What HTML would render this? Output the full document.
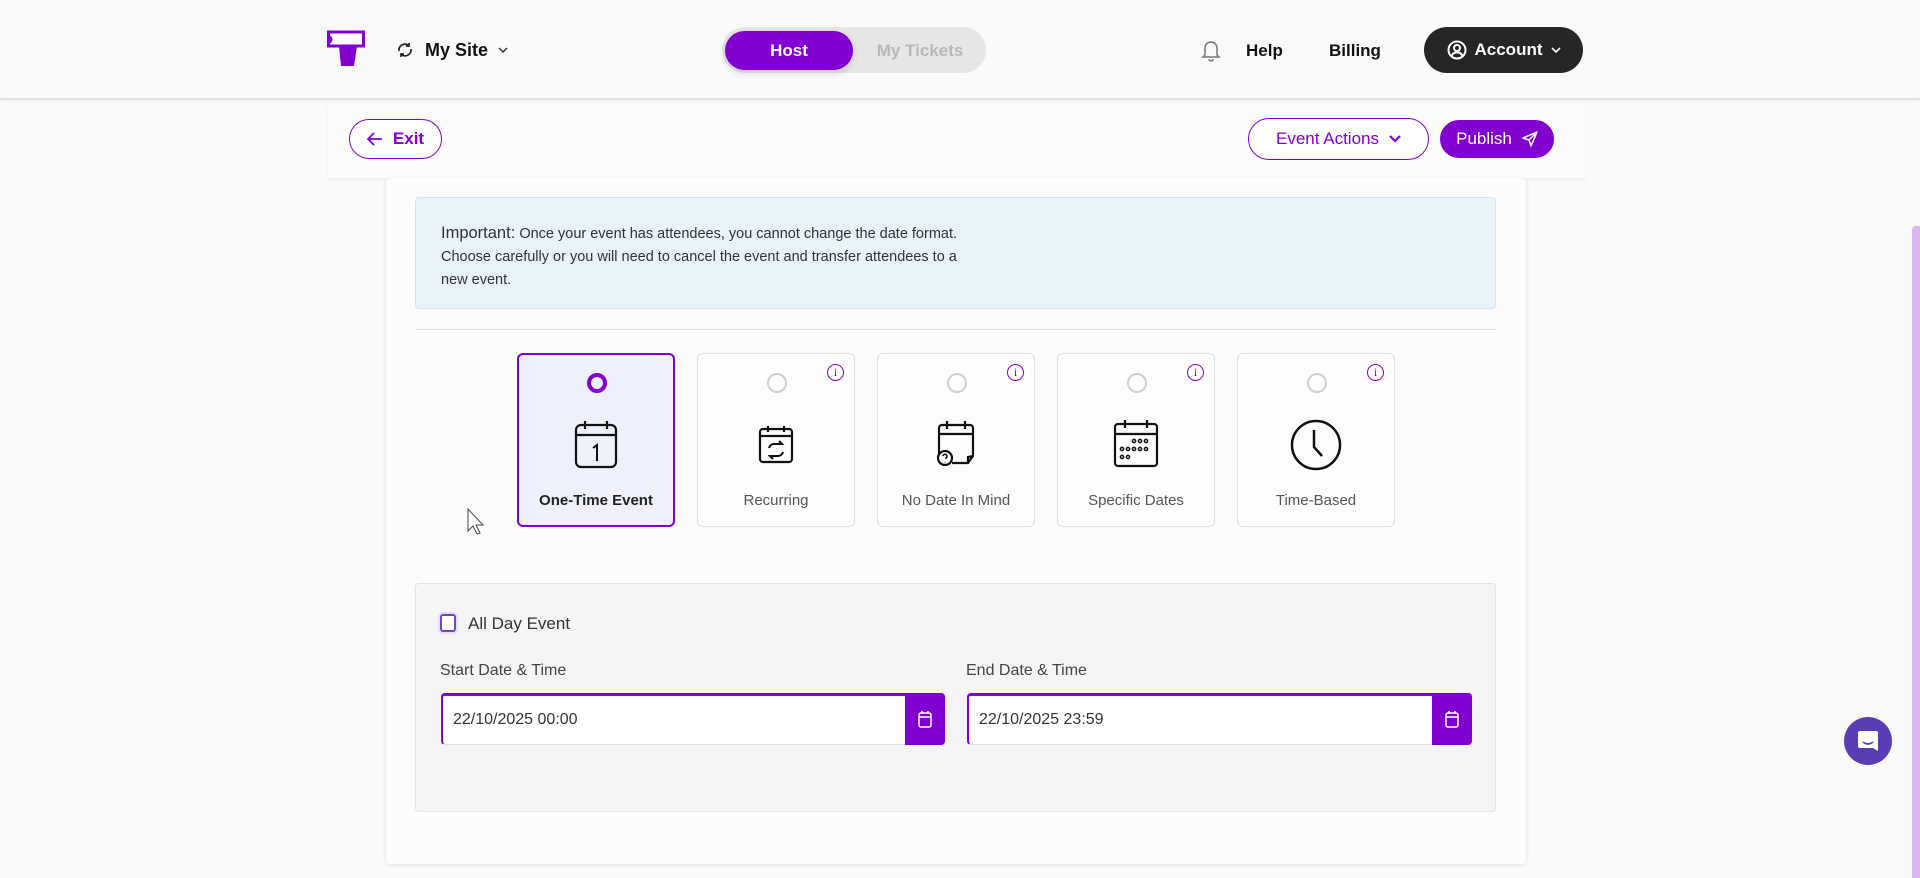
<!DOCTYPE html>
<html><head><meta charset="utf-8">
<style>
*{box-sizing:border-box;margin:0;padding:0}
body{width:1920px;height:878px;overflow:hidden;background:#fafafa;font-family:"Liberation Sans",sans-serif;color:#222;position:relative}
.abs{position:absolute}
.hdr{left:0;top:0;width:1920px;height:100px;background:#fafafa;border-bottom:2px solid #e2e2e2;box-shadow:0 1px 3px rgba(0,0,0,.05)}
.toggle{left:722px;top:27px;width:264px;height:46px;border-radius:23px;background:#e6e6e6}
.host{left:725px;top:31px;width:128px;height:39px;border-radius:20px;background:#8200d0;color:#fff;font-weight:bold;font-size:17px;display:flex;align-items:center;justify-content:center;box-shadow:0 3px 8px rgba(0,0,0,.15)}
.mt{left:860px;top:31px;width:120px;height:39px;color:#b8b8b8;font-weight:bold;font-size:17px;display:flex;align-items:center;justify-content:center}
.nav{font-weight:bold;font-size:17px;color:#111}
.acct{left:1424px;top:27px;width:159px;height:46px;border-radius:23px;background:#262626;color:#fff;font-weight:bold;font-size:17px;display:flex;align-items:center;justify-content:center;gap:8px}
.tb{left:328px;top:104px;width:1257px;height:74px;background:#fcfcfc;box-shadow:0 2px 4px rgba(0,0,0,.05)}
.btn{border:1.5px solid #8200d0;border-radius:22px;color:#8200d0;font-size:17px;display:flex;align-items:center;justify-content:center;gap:10px;background:#fff}
.card{left:386px;top:178px;width:1140px;height:686px;background:#fcfcfc;box-shadow:0 1px 4px rgba(0,0,0,.12);border-radius:4px}
.info{left:415px;top:197px;width:1081px;height:112px;background:#e9f3fa;border:1px solid #d3e3ef;border-radius:4px;padding:24px 25px;font-size:14.5px;line-height:23px;color:#333}
.opt{top:353px;width:158px;height:174px;border:1px solid #e2e2e2;border-radius:6px;background:#fdfdfd}
.opt.sel{border:2px solid #8200d0;background:#eef0fb}
.radio{position:absolute;left:69px;top:19px;width:20px;height:20px;border-radius:50%;border:2px solid #cfcfcf}
.sel .radio{border:4px solid #8200d0;left:68px;top:18px}
.lbl{position:absolute;left:0;right:0;top:138px;text-align:center;font-size:15px;color:#555}
.sel .lbl{font-weight:bold;color:#222;top:137px}
.ic{position:absolute;left:50%;top:64px;transform:translateX(-50%)}
.i{position:absolute;right:10px;top:10px;width:17px;height:17px;border-radius:50%;border:1.5px solid #8200d0;color:#8200d0;font-size:12px;font-family:"Liberation Serif",serif;text-align:center;line-height:14px}
.form{left:415px;top:583px;width:1081px;height:229px;background:#f5f5f7;border:1px solid #e4e4e4;border-radius:4px}
.fl{font-size:16px;color:#444}
.inp{top:693px;height:52px;border:1px solid #e0e0e0;border-left:2px solid #8200d0;border-top:3px solid #8200d0;border-radius:4px;background:#fff;font-size:16px;color:#333;padding-left:10px;display:flex;align-items:center}
.cal{position:absolute;right:-1px;top:-3px;width:40px;height:52px;background:#8200d0;border-radius:0 4px 4px 0;display:flex;align-items:center;justify-content:center}
</style></head><body>
<div class="abs hdr"></div>
<svg class="abs" style="left:327px;top:30px" width="40" height="38" viewBox="0 0 40 38"><rect x="1.5" y="2" width="35" height="14" fill="#fff" stroke="#8200d0" stroke-width="3"/><path d="M12 16h18l-3 20h-13z" fill="#8200d0"/><path d="M1.5 2v5a2 2 0 0 1 0 5v4" stroke="#8200d0" stroke-width="3" fill="none"/></svg>
<svg class="abs" style="left:396px;top:41px" width="18" height="18" viewBox="0 0 18 18" fill="none" stroke="#222" stroke-width="1.7"><path d="M3 10a6 6 0 0 1 9-6l1 1M15 8a6 6 0 0 1-9 6l-1-1"/><path d="M13 2v3h-3M5 16v-3h3"/></svg>
<div class="abs nav" style="left:425px;top:40px;font-size:18px">My Site</div>
<svg class="abs" style="left:497px;top:46px" width="12" height="8" viewBox="0 0 12 8"><path d="M2 2l4 4 4-4" stroke="#333" stroke-width="1.5" fill="none"/></svg>
<div class="abs toggle"></div><div class="abs host">Host</div><div class="abs mt">My Tickets</div>
<svg class="abs" style="left:1201px;top:38px" width="20" height="24" viewBox="0 0 20 24" fill="none" stroke="#777" stroke-width="1.5"><path d="M4 17V10a6 6 0 0 1 12 0v7l2 2H2z"/><path d="M8 21a2 2 0 0 0 4 0"/></svg>
<div class="abs nav" style="left:1246px;top:41px">Help</div>
<div class="abs nav" style="left:1329px;top:41px">Billing</div>
<div class="abs acct"><svg width="20" height="20" viewBox="0 0 20 20" fill="none" stroke="#fff" stroke-width="2"><circle cx="10" cy="10" r="8.5"/><circle cx="10" cy="8" r="3"/><path d="M4.5 16a6 6 0 0 1 11 0"/></svg>Account<svg width="10" height="8" viewBox="0 0 10 8"><path d="M1 2l4 4 4-4" stroke="#fff" stroke-width="1.6" fill="none"/></svg></div>
<div class="abs tb"></div>
<div class="abs btn" style="left:349px;top:119px;width:93px;height:40px;font-weight:bold"><svg width="16" height="14" viewBox="0 0 16 14"><path d="M15 7H2M7 1L1 7l6 6" stroke="#8200d0" stroke-width="1.8" fill="none"/></svg>Exit</div>
<div class="abs btn" style="left:1248px;top:118px;width:181px;height:42px">Event Actions<svg width="12" height="8" viewBox="0 0 12 8"><path d="M1 1l5 5 5-5" stroke="#8200d0" stroke-width="2.2" fill="none"/></svg></div>
<div class="abs btn" style="left:1440px;top:120px;width:114px;height:38px;background:#8200d0;color:#fff">Publish<svg width="16" height="16" viewBox="0 0 16 16"><path d="M15 1L1 7l6 2 2 6z M15 1L7 9" stroke="#fff" stroke-width="1.5" fill="none" stroke-linejoin="round"/></svg></div>
<div class="abs card"></div>
<div class="abs info"><span style="font-size:16.5px">Important:</span> Once your event has attendees, you cannot change the date format.<br>Choose carefully or you will need to cancel the event and transfer attendees to a<br>new event.</div>
<div class="abs" style="left:415px;top:329px;width:1081px;height:1px;background:#e0e0e0"></div>

<div class="abs opt sel" style="left:517px"><div class="radio"></div>
<svg class="ic" width="46" height="50" viewBox="0 0 46 50" fill="none" stroke="#111" stroke-width="2.2"><rect x="3" y="6" width="40" height="42" rx="5"/><path d="M3 16h40M12 2v8M34 2v8"/><path d="M20 29l4-3v16" stroke-width="2"/></svg>
<div class="lbl">One-Time Event</div></div>

<div class="abs opt" style="left:697px"><div class="radio"></div><div class="i">i</div>
<svg class="ic" style="top:70px" width="38" height="40" viewBox="0 0 38 40" fill="none" stroke="#111" stroke-width="2.2"><rect x="3" y="5" width="32" height="33" rx="3"/><path d="M3 12h32M11 2v6M27 2v6"/><path d="M12 24a5 5 0 0 1 5-4h8l-3-3M26 28a5 5 0 0 1-5 4h-8l3 3" stroke-width="2"/></svg>
<div class="lbl">Recurring</div></div>

<div class="abs opt" style="left:877px"><div class="radio"></div><div class="i">i</div>
<svg class="ic" width="48" height="50" viewBox="0 0 48 50" fill="none" stroke="#111" stroke-width="2.2"><path d="M7 36V10a3 3 0 0 1 3-3h28a3 3 0 0 1 3 3v28l-5 7H20"/><path d="M7 16h34M15 3v8M33 3v8M36 45v-6l5-1"/><circle cx="13" cy="40" r="7"/><path d="M11 38a2 2 0 1 1 3 2v1M13 44v.5" stroke-width="1.6"/></svg>
<div class="lbl">No Date In Mind</div></div>

<div class="abs opt" style="left:1057px"><div class="radio"></div><div class="i">i</div>
<svg class="ic" width="48" height="50" viewBox="0 0 48 50" fill="none" stroke="#111" stroke-width="2.2"><rect x="3" y="6" width="42" height="42" rx="3"/><path d="M3 16h42M13 2v8M35 2v8"/><g stroke-width="1.5"><circle cx="22" cy="23" r="1.6"/><circle cx="28" cy="23" r="1.6"/><circle cx="34" cy="23" r="1.6"/><circle cx="10" cy="31" r="1.6"/><circle cx="16" cy="31" r="1.6"/><circle cx="22" cy="31" r="1.6"/><circle cx="28" cy="31" r="1.6"/><circle cx="34" cy="31" r="1.6"/><circle cx="10" cy="39" r="1.6"/><circle cx="16" cy="39" r="1.6"/></g></svg>
<div class="lbl">Specific Dates</div></div>

<div class="abs opt" style="left:1237px"><div class="radio"></div><div class="i">i</div>
<svg class="ic" width="54" height="54" viewBox="0 0 54 54" fill="none" stroke="#111" stroke-width="2.5"><circle cx="27" cy="27" r="24"/><path d="M25 12v17l8 9"/></svg>
<div class="lbl">Time-Based</div></div>

<svg class="abs" style="left:467px;top:508px" width="18" height="28" viewBox="0 0 18 28"><path d="M1 1v22l5-5 4 8 3-1-4-8h7z" fill="#fff" stroke="#444" stroke-width="1"/></svg>

<div class="abs form"></div>
<div class="abs" style="left:440px;top:614px;width:16px;height:18px;border:2px solid #7a3fc0;border-radius:3px;background:#fff;box-shadow:0 0 0 2px #dbe4f5"></div>
<div class="abs fl" style="left:468px;top:614px;font-size:17px;color:#333">All Day Event</div>
<div class="abs fl" style="left:440px;top:662px">Start Date &amp; Time</div>
<div class="abs fl" style="left:966px;top:662px">End Date &amp; Time</div>
<div class="abs inp" style="left:441px;width:504px">22/10/2025 00:00<div class="cal"><svg width="14" height="18" viewBox="0 0 14 18" fill="none" stroke="#fff" stroke-width="1.5"><rect x="1" y="3" width="12" height="14" rx="2"/><path d="M1 7h12M4 1v3M10 1v3"/></svg></div></div>
<div class="abs inp" style="left:967px;width:505px">22/10/2025 23:59<div class="cal"><svg width="14" height="18" viewBox="0 0 14 18" fill="none" stroke="#fff" stroke-width="1.5"><rect x="1" y="3" width="12" height="14" rx="2"/><path d="M1 7h12M4 1v3M10 1v3"/></svg></div></div>

<div class="abs" style="left:1912px;top:226px;width:8px;height:652px;background:#dcb8ef;border-radius:4px 0 0 0"></div>
<div class="abs" style="left:1844px;top:717px;width:48px;height:48px;border-radius:50%;background:#5a3db5;display:flex;align-items:center;justify-content:center"><svg width="22" height="24" viewBox="0 0 22 24"><path d="M3 2h16a2 2 0 0 1 2 2v18l-5-3H3a2 2 0 0 1-2-2V4a2 2 0 0 1 2-2z" fill="#fff"/><path d="M6 13q5 4 10 0" stroke="#5a3db5" stroke-width="1.6" fill="none"/></svg></div>
</body></html>
